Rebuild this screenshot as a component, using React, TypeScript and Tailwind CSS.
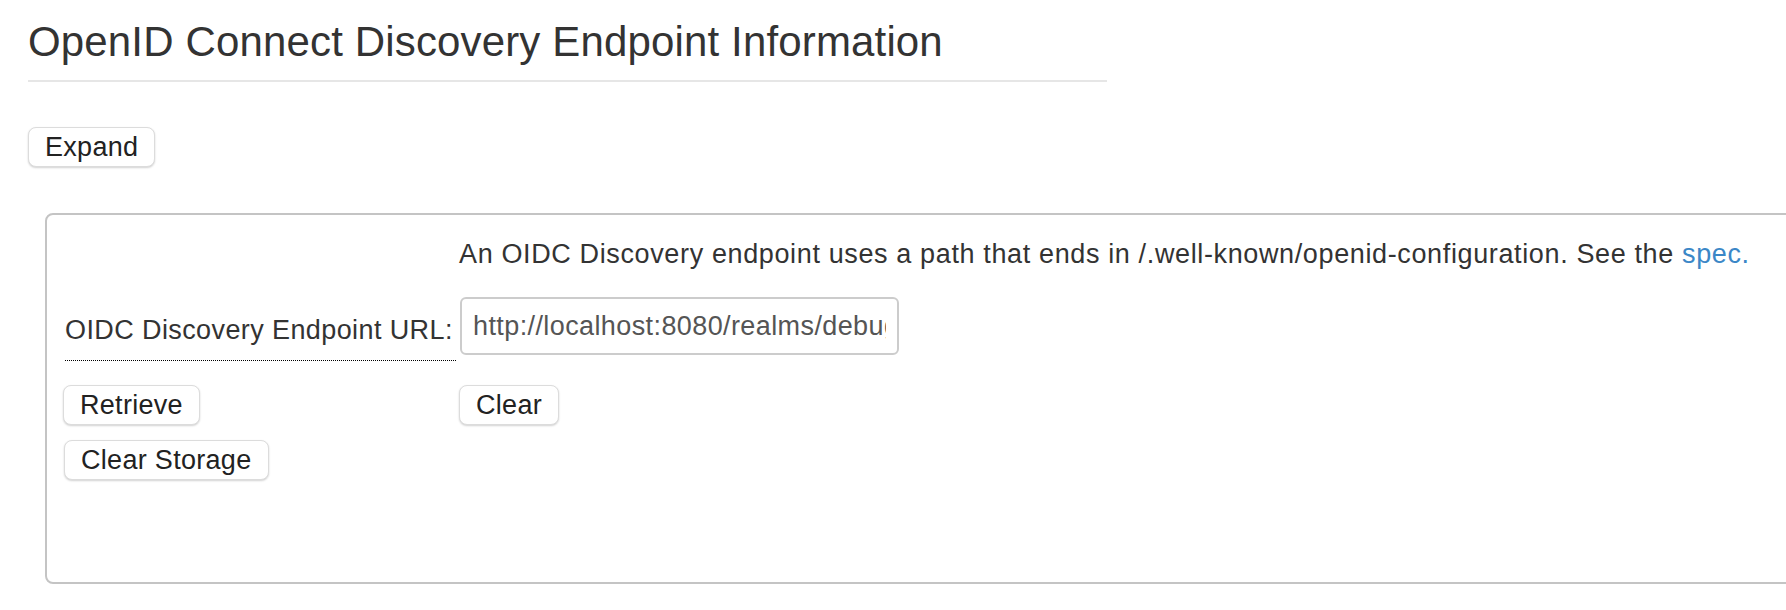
import React from 'react';

const btn =
  'h-[40px] px-[16px] bg-white border border-[#dcdcdc] rounded-[8px] shadow-[0_1px_2px_rgba(0,0,0,0.18)] text-[27px] leading-none tracking-[0.3px] text-[#222] whitespace-nowrap';

export default function App() {
  return (
    <div className="w-[1786px] h-[610px] overflow-hidden bg-white text-[#333] font-['Liberation_Sans',Arial,sans-serif]">
      <div className="pl-[28px] pt-[19px]">
        <h1 className="text-[42px] leading-[46px] font-normal tracking-[0.15px] text-[#333] whitespace-nowrap">
          OpenID Connect Discovery Endpoint Information
        </h1>
        <div className="mt-[15px] w-[1079px] h-[2px] bg-[#e6e6e6]" />

        <button className={`${btn} mt-[45px]`}>Expand</button>

        <div className="mt-[46px] ml-[17px] w-[1800px] h-[371px] border-2 border-[#c4c4c4] rounded-[8px] pt-[24px] pl-[18px]">
          <div className="grid grid-cols-[391px_auto] gap-x-[3px] justify-start">
            <div />
            <p className="text-[27px] leading-[31px] tracking-[0.63px] whitespace-nowrap">
              An OIDC Discovery endpoint uses a path that ends in /.well-known/openid-configuration. See the{' '}
              <a href="#" className="text-[#3b87c7]">spec.</a>
            </p>

            <div className="mt-[27px] h-[64px] border-b border-dotted border-black pt-[18px]">
              <label className="block text-[27px] leading-[31px] tracking-[0.4px] whitespace-nowrap">
                OIDC Discovery Endpoint URL:
              </label>
            </div>
            <div className="mt-[27px] pl-[1px]">
              <input
                type="text"
                defaultValue="http://localhost:8080/realms/debug/.well-known/openid-configuration"
                className="w-[439px] h-[58px] border-2 border-[#cccccc] rounded-[6px] px-[11px] text-[27px] tracking-[0.4px] text-[#555] outline-none bg-white"
              />
            </div>

            <div className="mt-[24px] -ml-[2px]">
              <button className={btn}>Retrieve</button>
            </div>
            <div className="mt-[24px]">
              <button className={btn}>Clear</button>
            </div>
          </div>

          <div className="mt-[15px] -ml-[1px]">
            <button className={btn}>Clear Storage</button>
          </div>
        </div>
      </div>
    </div>
  );
}
